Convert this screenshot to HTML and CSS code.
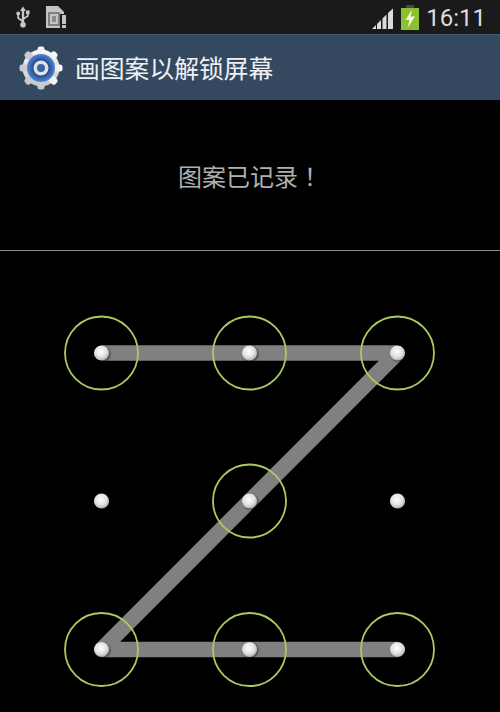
FILE: index.html
```html
<!DOCTYPE html>
<html lang="zh">
<head>
<meta charset="utf-8">
<title>画图案以解锁屏幕</title>
<link rel="stylesheet" href="styles.css">
</head>
<body>
<div class="screen">
  <div class="statusbar">
    <div class="status-left">
      <svg class="ic-usb" viewBox="0 0 14 22" width="14" height="22">
        <path d="M7 0.500 L10 5 H8.200 V17 H5.800 V5 H4 Z" fill="#c8c8c8"/>
        <circle cx="7" cy="18.700" r="2.800" fill="#c8c8c8"/>
        <path d="M7 15.500 L2.200 12 V8.500 M7 13 L11.800 10 V7.500" fill="none" stroke="#c8c8c8" stroke-width="1.800"/>
        <circle cx="2.200" cy="7.500" r="1.900" fill="#c8c8c8"/>
        <rect x="10" y="4.500" width="3.600" height="3.600" fill="#c8c8c8"/>
      </svg>
      <svg class="ic-sim" viewBox="0 0 22 24" width="22" height="24">
        <path d="M1 1 H13 L19 7 V23 H1 Z" fill="#c4c4c4"/>
        <rect x="4" y="8" width="10" height="12" fill="none" stroke="#6a6a6a" stroke-width="1.500"/>
        <rect x="7" y="11" width="4" height="6" fill="#8a8a8a"/>
        <rect x="15" y="9" width="7" height="15" fill="#1a1a1a"/>
        <rect x="17" y="10" width="4" height="9" fill="#c4c4c4"/>
        <rect x="17" y="20" width="4" height="3" fill="#c4c4c4"/>
      </svg>
    </div>
    <div class="status-right">
      <svg class="ic-signal" viewBox="0 0 24 21" width="24" height="21">
        <path d="M1 21 L5 17 V21 Z M6 21 V16 L10 12 V21 Z M11.500 21 V10.500 L15.500 6.500 V21 Z M17 21 V5 L22 0.500 V21 Z" fill="#dcdcdc"/>
      </svg>
      <svg class="ic-batt" viewBox="0 0 18 25" width="18" height="25">
        <rect x="5" y="0" width="8" height="3" fill="#4a4a4a"/>
        <rect x="0" y="3" width="18" height="22" fill="#8cc02e"/>
        <path d="M11 4.500 L4.500 15 H8.500 L6.500 23 L14 11.500 H9.500 Z" fill="#eef6d8"/>
      </svg>
      <span class="clock">16:11</span>
    </div>
  </div>
  <header class="actionbar">
    <svg class="ic-gear" viewBox="0 0 46 46" width="46" height="46">
      <defs>
        <linearGradient id="gearFill" x1="0" y1="0" x2="0" y2="1">
          <stop offset="0" stop-color="#f8f8f8"/>
          <stop offset="1" stop-color="#c4c7cb"/>
        </linearGradient>
        <radialGradient id="gearBlue" cx="0.500" cy="0.500" r="0.500">
          <stop offset="0.450" stop-color="#1f3f80"/>
          <stop offset="1" stop-color="#4f86d6"/>
        </radialGradient>
      </defs>
      <g fill="url(#gearFill)">
        <circle cx="23" cy="23" r="18.500"/>
        <rect x="19.500" y="1.500" width="7" height="43" rx="2.500"/>
        <rect x="19.500" y="1.500" width="7" height="43" rx="2.500" transform="rotate(45 23 23)"/>
        <rect x="19.500" y="1.500" width="7" height="43" rx="2.500" transform="rotate(90 23 23)"/>
        <rect x="19.500" y="1.500" width="7" height="43" rx="2.500" transform="rotate(135 23 23)"/>
      </g>
      <circle cx="23" cy="23" r="14" fill="url(#gearBlue)"/>
      <circle cx="23" cy="23" r="7.500" fill="#dfe3e8"/>
      <circle cx="23" cy="23" r="4" fill="#39659f"/>
    </svg>
    <h1 class="title">画图案以解锁屏幕</h1>
  </header>
  <section class="message">
    <p class="message-text">图案已记录<span class="mark" lang="zh-TW">！</span></p>
  </section>
  <section class="pattern">
    <svg class="pattern-svg" viewBox="0 0 500 461" width="500" height="461">
      <defs>
        <radialGradient id="dot" cx="0.450" cy="0.400" r="0.600">
          <stop offset="0" stop-color="#ffffff"/>
          <stop offset="0.600" stop-color="#e2e2e2"/>
          <stop offset="1" stop-color="#b0b0b0"/>
        </radialGradient>
      </defs>
      <polyline points="101.500,102 397.500,102 101.500,398.500 397.500,398.500" fill="none" stroke="#808080" stroke-width="15.500" stroke-linejoin="bevel"/>
      <g fill="none" stroke="#a9cb5e" stroke-width="1.800">
        <circle cx="101.500" cy="102" r="36.500"/>
        <circle cx="249.500" cy="102" r="36.500"/>
        <circle cx="397.500" cy="102" r="36.500"/>
        <circle cx="249.500" cy="250" r="36.500"/>
        <circle cx="101.500" cy="398.500" r="36.500"/>
        <circle cx="249.500" cy="398.500" r="36.500"/>
        <circle cx="397.500" cy="398.500" r="36.500"/>
      </g>
      <g class="dots" fill="url(#dot)">
        <circle cx="101.500" cy="102" r="7.600"/>
        <circle cx="249.500" cy="102" r="7.600"/>
        <circle cx="397.500" cy="102" r="7.600"/>
        <circle cx="101.500" cy="250" r="7.600"/>
        <circle cx="249.500" cy="250" r="7.600"/>
        <circle cx="397.500" cy="250" r="7.600"/>
        <circle cx="101.500" cy="398.500" r="7.600"/>
        <circle cx="249.500" cy="398.500" r="7.600"/>
        <circle cx="397.500" cy="398.500" r="7.600"/>
      </g>
    </svg>
  </section>
</div>
</body>
</html>
```
FILE: styles.css
```css
html, body {
  margin: 0;
  padding: 0;
  background: #000;
}
.screen {
  width: 500px;
  height: 712px;
  display: flex;
  flex-direction: column;
  overflow: hidden;
  background: #000;
  font-family: "Noto Sans CJK SC", "Noto Sans", sans-serif;
}
.statusbar {
  height: 34px;
  flex: none;
  display: flex;
  align-items: center;
  justify-content: space-between;
  padding: 0 14px 0 16px;
  background: #1a1a1a;
}
.status-left, .status-right {
  display: flex;
  align-items: center;
}
.ic-usb { margin-right: 15px; }
.ic-signal { margin-right: 6px; margin-top: 2px; }
.ic-batt { margin-right: 7px; margin-top: 0; }
.clock {
  font-family: Roboto, sans-serif;
  font-size: 24px;
  line-height: 34px;
  color: #dcdcdc;
  position: relative;
  top: 1px;
}
.actionbar {
  height: 66px;
  flex: none;
  display: flex;
  align-items: center;
  padding-left: 18px;
  background: #34495f;
  border-top: 1px solid #42586e;
  box-sizing: border-box;
}
.ic-gear { flex: none; margin-right: 11px; }
.title {
  margin: 0;
  font-size: 24.800px;
  font-weight: 400;
  line-height: 1;
  color: #eef1f4;
}
.message {
  height: 151px;
  flex: none;
  display: flex;
  align-items: center;
  justify-content: center;
  box-sizing: border-box;
  border-bottom: 1px solid #8a8a8a;
}
.message-text {
  margin: 2px 0 0;
  font-size: 24px;
  font-weight: 400;
  line-height: 1;
  color: #b0b0b0;
}
.mark {
  font-family: "Noto Sans CJK TC", sans-serif;
}
.pattern {
  flex: 1;
}
.pattern-svg {
  display: block;
}
.dots {
  filter: drop-shadow(1px 1px 1px rgba(0, 0, 0, 0.55));
}
```
